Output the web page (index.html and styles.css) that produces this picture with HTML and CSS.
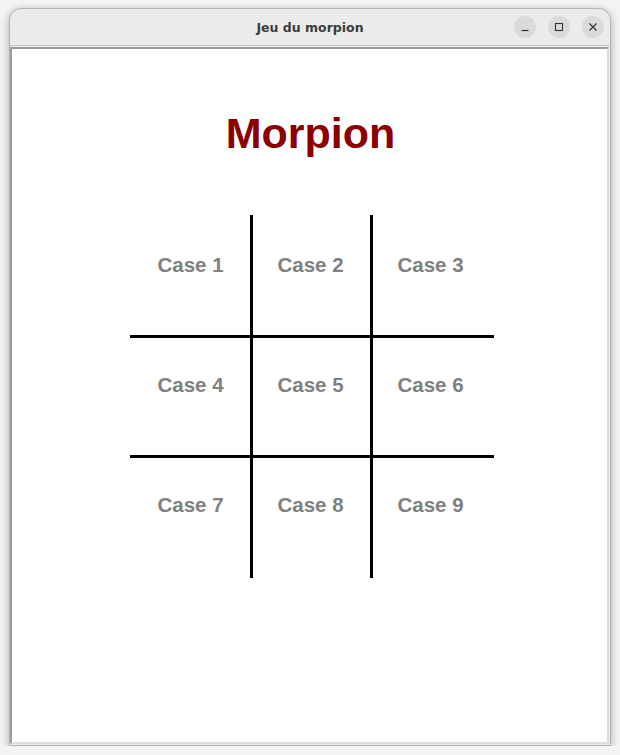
FILE: index.html
```html
<!DOCTYPE html>
<html lang="fr">
<head>
    <meta charset="UTF-8">
    <meta name="viewport" content="width=device-width, initial-scale=1.0">
    <title>Jeu du morpion</title>
    <link rel="stylesheet" href="styles.css">
</head>
<body>
    <div class="window">
        <div class="titlebar">
            <span class="title">Jeu du morpion</span>
            <div class="controls">
                <span class="ctrl">
                    <svg width="10" height="10" viewBox="0 0 10 10"><path d="M1.5 8.5h7" stroke="#333" stroke-width="1.2"/></svg>
                </span>
                <span class="ctrl">
                    <svg width="10" height="10" viewBox="0 0 10 10"><rect x="1.5" y="1.5" width="7" height="7" fill="none" stroke="#333" stroke-width="1.1"/></svg>
                </span>
                <span class="ctrl">
                    <svg width="10" height="10" viewBox="0 0 10 10"><path d="M1.5 1.5l7 7M8.5 1.5l-7 7" stroke="#333" stroke-width="1.2"/></svg>
                </span>
            </div>
        </div>
        <div class="content">
            <h1>Morpion</h1>
            <div class="board">
                <div class="cell">Case 1</div>
                <div class="cell">Case 2</div>
                <div class="cell">Case 3</div>
                <div class="cell">Case 4</div>
                <div class="cell">Case 5</div>
                <div class="cell">Case 6</div>
                <div class="cell">Case 7</div>
                <div class="cell">Case 8</div>
                <div class="cell">Case 9</div>
                <div class="line v1"></div>
                <div class="line v2"></div>
                <div class="line h1"></div>
                <div class="line h2"></div>
            </div>
        </div>
    </div>
</body>
</html>
```

FILE: styles.css
```css
body {
    margin: 0;
    background-color: #f4f4f4;
    font-family: "Liberation Sans", Arial, sans-serif;
}

.window {
    display: flex;
    flex-direction: column;
    width: 600px;
    height: 736px;
    margin: 8px 0 0 9px;
    border: 1px solid #b4b4b4;
    border-radius: 12px 12px 0 0;
    background-color: #ebebeb;
    box-shadow: 0 2px 8px rgba(0, 0, 0, 0.3);
}

.titlebar {
    position: relative;
    height: 36px;
    display: flex;
    justify-content: center;
    align-items: center;
    border-bottom: 1px solid #c4c4c4;
    border-radius: 12px 12px 0 0;
}

.title {
    font-family: "DejaVu Sans", sans-serif;
    font-weight: bold;
    font-size: 12.5px;
    color: #3c3c3c;
}

.controls {
    position: absolute;
    right: 6px;
    top: 7px;
    display: flex;
    gap: 12px;
}

.ctrl {
    width: 22px;
    height: 22px;
    border-radius: 50%;
    background-color: #dadada;
    display: flex;
    justify-content: center;
    align-items: center;
}

.content {
    flex: 1;
    margin: 1px 1px 1px 0;
    border: 2px solid;
    border-color: #9c9c9c #dcdcdc #dcdcdc #9c9c9c;
    background-color: #fff;
    padding-top: 60px;
}

h1 {
    margin: 0;
    text-align: center;
    font-size: 43px;
    line-height: 49px;
    color: #8b0000;
    position: relative;
    left: 1px;
}

.board {
    position: relative;
    display: grid;
    grid-template-columns: repeat(3, 120px);
    grid-template-rows: repeat(3, 120px);
    width: 364px;
    height: 363px;
    margin: 57px 0 0 118px;
}

.cell {
    padding-top: 38px;
    padding-left: 1px;
    text-align: center;
    font-size: 20.5px;
    line-height: 23px;
    font-weight: bold;
    color: #808080;
}

.line {
    position: absolute;
    background-color: #000;
}

.v1, .v2 {
    top: 0;
    width: 3px;
    height: 363px;
}

.v1 { left: 120px; }
.v2 { left: 240px; }

.h1, .h2 {
    left: 0;
    height: 3px;
    width: 364px;
}

.h1 { top: 120px; }
.h2 { top: 240px; }
```
